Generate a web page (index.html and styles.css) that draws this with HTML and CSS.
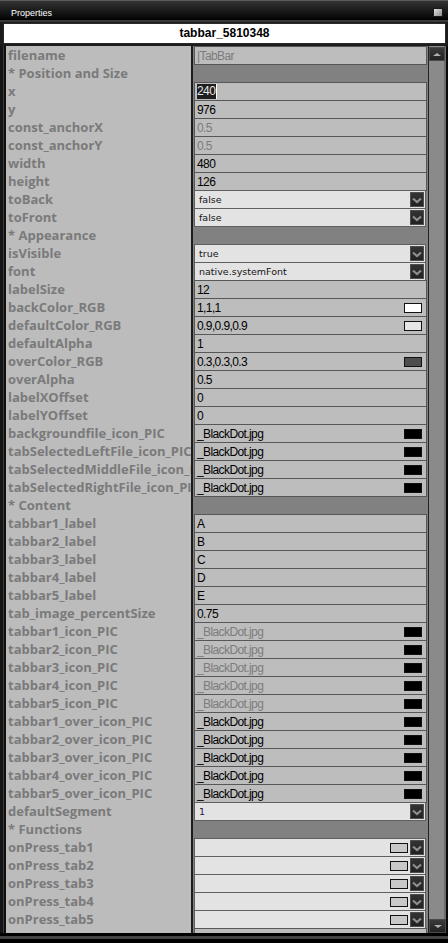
FILE: index.html
```html
<!DOCTYPE html>
<html>
<head>
<meta charset="utf-8">
<link rel="stylesheet" href="styles.css">
</head>
<body>
<div class="titlebar"><span class="title">Properties</span><span class="close"></span></div>
<div class="namewrap"><div class="namebox">tabbar_5810348</div></div>
<div class="main">
  <div class="lf"></div>
  <div class="list">
    <div class="row"><div class="lbl">filename</div><div class="val"><div class="cell dim">|TabBar</div></div></div>
    <div class="row"><div class="lbl">* Position and Size</div><div class="val"></div></div>
    <div class="row"><div class="lbl">x</div><div class="val"><div class="cell"><span class="hl">240</span></div></div></div>
    <div class="row"><div class="lbl">y</div><div class="val"><div class="cell">976</div></div></div>
    <div class="row"><div class="lbl">const_anchorX</div><div class="val"><div class="cell dim">0.5</div></div></div>
    <div class="row"><div class="lbl">const_anchorY</div><div class="val"><div class="cell dim">0.5</div></div></div>
    <div class="row"><div class="lbl">width</div><div class="val"><div class="cell">480</div></div></div>
    <div class="row"><div class="lbl">height</div><div class="val"><div class="cell">126</div></div></div>
    <div class="row"><div class="lbl">toBack</div><div class="val"><div class="sel"><span class="stxt">false</span><span class="arr"><svg width="14" height="15" viewBox="0 0 14 15"><polyline points="3,6.5 7,10 11,6.5" fill="none" stroke="#8e8e8e" stroke-width="2.2"/></svg></span></div></div></div>
    <div class="row"><div class="lbl">toFront</div><div class="val"><div class="sel"><span class="stxt">false</span><span class="arr"><svg width="14" height="15" viewBox="0 0 14 15"><polyline points="3,6.5 7,10 11,6.5" fill="none" stroke="#8e8e8e" stroke-width="2.2"/></svg></span></div></div></div>
    <div class="row"><div class="lbl">* Appearance</div><div class="val"></div></div>
    <div class="row"><div class="lbl">isVisible</div><div class="val"><div class="sel"><span class="stxt">true</span><span class="arr"><svg width="14" height="15" viewBox="0 0 14 15"><polyline points="3,6.5 7,10 11,6.5" fill="none" stroke="#8e8e8e" stroke-width="2.2"/></svg></span></div></div></div>
    <div class="row"><div class="lbl">font</div><div class="val"><div class="sel"><span class="stxt">native.systemFont</span><span class="arr"><svg width="14" height="15" viewBox="0 0 14 15"><polyline points="3,6.5 7,10 11,6.5" fill="none" stroke="#8e8e8e" stroke-width="2.2"/></svg></span></div></div></div>
    <div class="row"><div class="lbl">labelSize</div><div class="val"><div class="cell">12</div></div></div>
    <div class="row"><div class="lbl">backColor_RGB</div><div class="val"><div class="cell">1,1,1<span class="sw white"></span></div></div></div>
    <div class="row"><div class="lbl">defaultColor_RGB</div><div class="val"><div class="cell">0.9,0.9,0.9<span class="sw light"></span></div></div></div>
    <div class="row"><div class="lbl">defaultAlpha</div><div class="val"><div class="cell">1</div></div></div>
    <div class="row"><div class="lbl">overColor_RGB</div><div class="val"><div class="cell">0.3,0.3,0.3<span class="sw darkg"></span></div></div></div>
    <div class="row"><div class="lbl">overAlpha</div><div class="val"><div class="cell">0.5</div></div></div>
    <div class="row"><div class="lbl">labelXOffset</div><div class="val"><div class="cell">0</div></div></div>
    <div class="row"><div class="lbl">labelYOffset</div><div class="val"><div class="cell">0</div></div></div>
    <div class="row"><div class="lbl">backgroundfile_icon_PIC</div><div class="val"><div class="cell">_BlackDot.jpg<span class="sw black"></span></div></div></div>
    <div class="row"><div class="lbl">tabSelectedLeftFile_icon_PIC</div><div class="val"><div class="cell">_BlackDot.jpg<span class="sw black"></span></div></div></div>
    <div class="row"><div class="lbl">tabSelectedMiddleFile_icon_PIC</div><div class="val"><div class="cell">_BlackDot.jpg<span class="sw black"></span></div></div></div>
    <div class="row"><div class="lbl">tabSelectedRightFile_icon_PIC</div><div class="val"><div class="cell">_BlackDot.jpg<span class="sw black"></span></div></div></div>
    <div class="row"><div class="lbl">* Content</div><div class="val"></div></div>
    <div class="row"><div class="lbl">tabbar1_label</div><div class="val"><div class="cell">A</div></div></div>
    <div class="row"><div class="lbl">tabbar2_label</div><div class="val"><div class="cell">B</div></div></div>
    <div class="row"><div class="lbl">tabbar3_label</div><div class="val"><div class="cell">C</div></div></div>
    <div class="row"><div class="lbl">tabbar4_label</div><div class="val"><div class="cell">D</div></div></div>
    <div class="row"><div class="lbl">tabbar5_label</div><div class="val"><div class="cell">E</div></div></div>
    <div class="row"><div class="lbl">tab_image_percentSize</div><div class="val"><div class="cell">0.75</div></div></div>
    <div class="row"><div class="lbl">tabbar1_icon_PIC</div><div class="val"><div class="cell dim">_BlackDot.jpg<span class="sw black"></span></div></div></div>
    <div class="row"><div class="lbl">tabbar2_icon_PIC</div><div class="val"><div class="cell dim">_BlackDot.jpg<span class="sw black"></span></div></div></div>
    <div class="row"><div class="lbl">tabbar3_icon_PIC</div><div class="val"><div class="cell dim">_BlackDot.jpg<span class="sw black"></span></div></div></div>
    <div class="row"><div class="lbl">tabbar4_icon_PIC</div><div class="val"><div class="cell dim">_BlackDot.jpg<span class="sw black"></span></div></div></div>
    <div class="row"><div class="lbl">tabbar5_icon_PIC</div><div class="val"><div class="cell dim">_BlackDot.jpg<span class="sw black"></span></div></div></div>
    <div class="row"><div class="lbl">tabbar1_over_icon_PIC</div><div class="val"><div class="cell">_BlackDot.jpg<span class="sw black"></span></div></div></div>
    <div class="row"><div class="lbl">tabbar2_over_icon_PIC</div><div class="val"><div class="cell">_BlackDot.jpg<span class="sw black"></span></div></div></div>
    <div class="row"><div class="lbl">tabbar3_over_icon_PIC</div><div class="val"><div class="cell">_BlackDot.jpg<span class="sw black"></span></div></div></div>
    <div class="row"><div class="lbl">tabbar4_over_icon_PIC</div><div class="val"><div class="cell">_BlackDot.jpg<span class="sw black"></span></div></div></div>
    <div class="row"><div class="lbl">tabbar5_over_icon_PIC</div><div class="val"><div class="cell">_BlackDot.jpg<span class="sw black"></span></div></div></div>
    <div class="row"><div class="lbl">defaultSegment</div><div class="val"><div class="sel"><span class="stxt seg">1</span><span class="arr"><svg width="14" height="15" viewBox="0 0 14 15"><polyline points="3,6.5 7,10 11,6.5" fill="none" stroke="#8e8e8e" stroke-width="2.2"/></svg></span></div></div></div>
    <div class="row"><div class="lbl">* Functions</div><div class="val"></div></div>
    <div class="row"><div class="lbl">onPress_tab1</div><div class="val"><div class="sel"><span class="fsw"></span><span class="arr"><svg width="14" height="15" viewBox="0 0 14 15"><polyline points="3,6.5 7,10 11,6.5" fill="none" stroke="#8e8e8e" stroke-width="2.2"/></svg></span></div></div></div>
    <div class="row"><div class="lbl">onPress_tab2</div><div class="val"><div class="sel"><span class="fsw"></span><span class="arr"><svg width="14" height="15" viewBox="0 0 14 15"><polyline points="3,6.5 7,10 11,6.5" fill="none" stroke="#8e8e8e" stroke-width="2.2"/></svg></span></div></div></div>
    <div class="row"><div class="lbl">onPress_tab3</div><div class="val"><div class="sel"><span class="fsw"></span><span class="arr"><svg width="14" height="15" viewBox="0 0 14 15"><polyline points="3,6.5 7,10 11,6.5" fill="none" stroke="#8e8e8e" stroke-width="2.2"/></svg></span></div></div></div>
    <div class="row"><div class="lbl">onPress_tab4</div><div class="val"><div class="sel"><span class="fsw"></span><span class="arr"><svg width="14" height="15" viewBox="0 0 14 15"><polyline points="3,6.5 7,10 11,6.5" fill="none" stroke="#8e8e8e" stroke-width="2.2"/></svg></span></div></div></div>
    <div class="row"><div class="lbl">onPress_tab5</div><div class="val"><div class="sel"><span class="fsw"></span><span class="arr"><svg width="14" height="15" viewBox="0 0 14 15"><polyline points="3,6.5 7,10 11,6.5" fill="none" stroke="#8e8e8e" stroke-width="2.2"/></svg></span></div></div></div>
    <div class="row"><div class="lbl"></div><div class="val"><div class="cell"></div></div></div>
  </div>
  <div class="sb">
    <div class="sbtn up"><span class="tri-up"></span></div>
    <div class="sbtn down"><span class="tri-down"></span></div>
  </div>
  <div class="rf"></div>
</div>
<div class="footer"></div>
</body>
</html>
```
FILE: styles.css
```css
html, body {
  margin: 0;
  padding: 0;
  background: #000;
}
body {
  width: 448px;
  height: 943px;
  overflow: hidden;
  font-family: "Liberation Sans", Arial, sans-serif;
}
.titlebar {
  box-sizing: border-box;
  height: 20px;
  padding: 6px 0 0 11px;
  display: flex;
  align-items: flex-start;
  background: linear-gradient(#5a5a5a 0, #5a5a5a 1px, #333 1px, #0a0a0a 85%, #000 100%);
}
.title {
  color: #fff;
  font-size: 9px;
  line-height: 14px;
}
.close {
  margin-left: auto;
  margin-right: 5px;
  margin-top: 2px;
  width: 8px;
  height: 7px;
  border: 1px solid #1a1a1a;
  background: linear-gradient(135deg, #e0e0e0, #8c8c8c);
}
.namewrap {
  padding: 3px 2px 2px 3px;
  background: linear-gradient(#3a3a3a 0, #3a3a3a 2px, #1c1c1c 2px);
}
.namebox {
  height: 19px;
  border: 1px solid #2a2a2a;
  background: #fff;
  text-align: center;
  font-weight: bold;
  font-size: 12px;
  line-height: 19px;
  color: #000;
}
.main {
  display: flex;
  height: 887px;
}
.lf {
  width: 5px;
  background: linear-gradient(90deg, #141414 0 3px, #3c3c3c 3px 4px, #0c0c0c 4px);
}
.list {
  width: 423px;
  height: 887px;
  overflow: hidden;
  background: linear-gradient(90deg, #111 0 1px, #bcbcbc 1px 186px, #1c1c1c 186px 188px, #818181 188px);
}
.row {
  display: grid;
  grid-template-columns: 186px 237px;
  height: 18px;
}
.lbl {
  box-sizing: border-box;
  padding: 1px 0 0 3px;
  line-height: 17px;
  font-family: "Open Sans", sans-serif;
  font-weight: bold;
  font-size: 13px;
  color: #7a7a7a;
  white-space: nowrap;
  overflow: hidden;
}
.val {
  padding: 0 1px 0 3px;
}
.cell {
  box-sizing: border-box;
  height: 19px;
  margin-bottom: -1px;
  border: 1px solid #575757;
  background: #bdbdbd;
  display: flex;
  padding: 1px 0 0 2px;
  line-height: 16px;
  font-family: "Liberation Sans", Arial, sans-serif;
  font-size: 12px;
  letter-spacing: -0.6px;
  color: #000;
  white-space: nowrap;
}
.cell.dim {
  color: #7c7c7c;
}
.hl {
  background: #1e1e1e;
  color: #e6e6e6;
  padding-right: 1px;
  height: 15px;
  line-height: 15px;
  border-right: 1px solid #fff;
}
.sw {
  box-sizing: border-box;
  margin-left: auto;
  margin-right: 4px;
  margin-top: 3px;
  width: 18px;
  height: 10px;
  border: 1px solid #111;
}
.sw.white { background: #fff; }
.sw.light { background: #e6e6e6; }
.sw.darkg { background: #4d4d4d; }
.sw.black { background: #000; }
.sel {
  box-sizing: border-box;
  height: 19px;
  margin: 0 1px -1px 0;
  border: 1px solid #606060;
  background: #e3e3e3;
  display: flex;
  padding-left: 4px;
  font-family: "DejaVu Sans", sans-serif;
  font-size: 9.5px;
  line-height: 17px;
  color: #141414;
}
.stxt {
  margin-right: auto;
}
.seg {
  color: #1a2050;
}
.fsw {
  box-sizing: border-box;
  margin-left: auto;
  margin-right: 2px;
  margin-top: 4px;
  width: 18px;
  height: 10px;
  border: 1px solid #111;
  background: #c8c8c8;
}
.arr {
  box-sizing: border-box;
  width: 14px;
  height: 15px;
  margin: 1px 1px 0 0;
  border: 1px solid #4e4e4e;
  background: linear-gradient(#333, #222);
  display: flex;
  align-items: center;
  justify-content: center;
}
.arr svg {
  display: block;
  margin: -1px;
}
.sb {
  box-sizing: border-box;
  width: 18px;
  border-left: 1px solid #222;
  background: linear-gradient(90deg, #8a8a8a 0 15px, #6c6c6c 15px);
  display: flex;
  flex-direction: column;
  justify-content: space-between;
}
.sbtn {
  box-sizing: border-box;
  height: 14px;
  width: 16px;
  background: linear-gradient(#3a3a3a, #222);
  border: 1px solid #4a4a4a;
  display: flex;
  align-items: center;
  justify-content: center;
}
.sbtn.up { margin-top: 1px; }
.sbtn.down { width: 17px; }
.tri-up {
  width: 0;
  height: 0;
  border-left: 4px solid transparent;
  border-right: 4px solid transparent;
  border-bottom: 3px solid #b0b0b0;
}
.tri-down {
  width: 0;
  height: 0;
  border-left: 4px solid transparent;
  border-right: 4px solid transparent;
  border-top: 3px solid #b0b0b0;
}
.rf {
  width: 2px;
  background: #0a0a0a;
}
.footer {
  height: 10px;
  background: linear-gradient(#000 0 3px, #444 3px 6px, #000 6px);
}
```
